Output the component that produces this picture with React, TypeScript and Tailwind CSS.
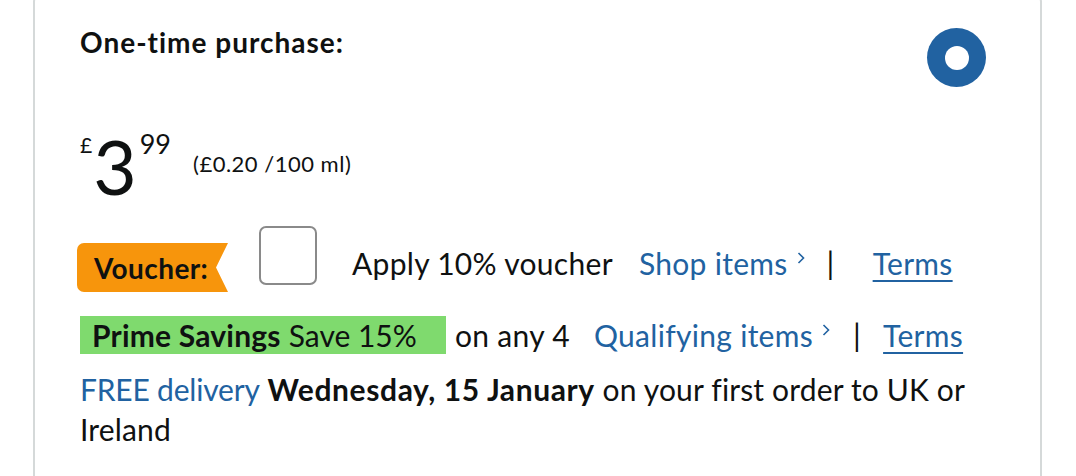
const font = { fontFamily: 'Lato, "Liberation Sans", sans-serif' }

function Chevron() {
  return (
    <svg width="10" height="12" viewBox="0 0 10 12" className="ml-[8px] -translate-y-[5px]">
      <path d="M2.5 1 L7.5 6 L2.5 11" fill="none" stroke="#2162a1" strokeWidth="1.6" />
    </svg>
  )
}

export default function App() {
  return (
    <div className="w-[1076px] h-[476px] overflow-hidden bg-white text-[#0f1111]" style={font}>
      <div className="ml-[33px] -mt-[8px] w-[1009px] h-[520px] border-2 border-[#d5d9d9] rounded-[10px] pl-[45px] pr-[54px] pt-[28px]">
        {/* Header */}
        <div className="flex items-start justify-between">
          <h2 className="text-[28px] font-bold leading-[40px] tracking-[1px]">One-time purchase:</h2>
          <div className="mt-[6px] w-[59px] h-[59px] rounded-full bg-[#2162a1] flex items-center justify-center">
            <div className="w-[24px] h-[24px] rounded-full bg-white" />
          </div>
        </div>

        {/* Price */}
        <div className="flex items-start mt-[41px] h-[70px]">
          <span className="text-[21px] leading-none mt-[6px]">£</span>
          <span className="text-[75px] leading-[60px] ml-[1px] mt-[8px]">3</span>
          <span className="text-[27px] leading-none ml-[3px] mt-[2px]">99</span>
          <span className="text-[22px] leading-none tracking-[0.5px] ml-[22px] mt-[25px]">(£0.20 /100 ml)</span>
        </div>

        {/* Voucher */}
        <div className="flex items-start mt-[28px] text-[30px] tracking-[0.3px]">
          <div
            className="w-[151px] h-[49px] -ml-[3px] mt-[17px] rounded-l-[7px] bg-[#f7950c] flex items-center pl-[17px] text-[28px] font-bold tracking-[0.4px]"
            style={{ clipPath: 'polygon(0 0, 100% 0, calc(100% - 12px) 50%, 100% 100%, 0 100%)' }}
          >
            Voucher:
          </div>
          <div className="ml-[31px] w-[58px] h-[59px] rounded-[7px] border-2 border-[#8a8a8a] bg-white" />
          <div className="flex items-center h-[40px] mt-[17px]">
            <span className="ml-[35px]">Apply 10% voucher</span>
            <span className="ml-[26px] text-[#2162a1]">Shop items</span>
            <Chevron />
            <span className="ml-[21px] text-[31px]">|</span>
            <span className="ml-[38px] text-[#2162a1] underline underline-offset-[5px] decoration-[2px]">Terms</span>
          </div>
        </div>

        {/* Prime savings */}
        <div className="flex items-center mt-[24px] text-[30px] tracking-[0.3px] leading-none">
          <div className="h-[38px] w-[366px] bg-[#7fda6e] flex items-center pl-[12px]">
            <span className="font-bold tracking-[0.2px]">Prime Savings</span>
            <span className="ml-[8px] tracking-normal">Save 15%</span>
          </div>
          <span className="ml-[9px]">on any 4</span>
          <span className="ml-[24px] text-[#2162a1]">Qualifying items</span>
          <Chevron />
          <span className="ml-[22px] text-[31px]">|</span>
          <span className="ml-[22px] text-[#2162a1] underline underline-offset-[5px] decoration-[2px]">Terms</span>
        </div>

        {/* Delivery */}
        <p className="mt-[15px] text-[30px] tracking-[0.15px] leading-[40px] w-[900px]">
          <span className="text-[#2162a1] tracking-[-0.2px]">FREE delivery</span>{' '}
          <span className="font-bold tracking-[0.6px]">Wednesday, 15 January</span> on your first order to UK or Ireland
        </p>
      </div>
    </div>
  )
}
